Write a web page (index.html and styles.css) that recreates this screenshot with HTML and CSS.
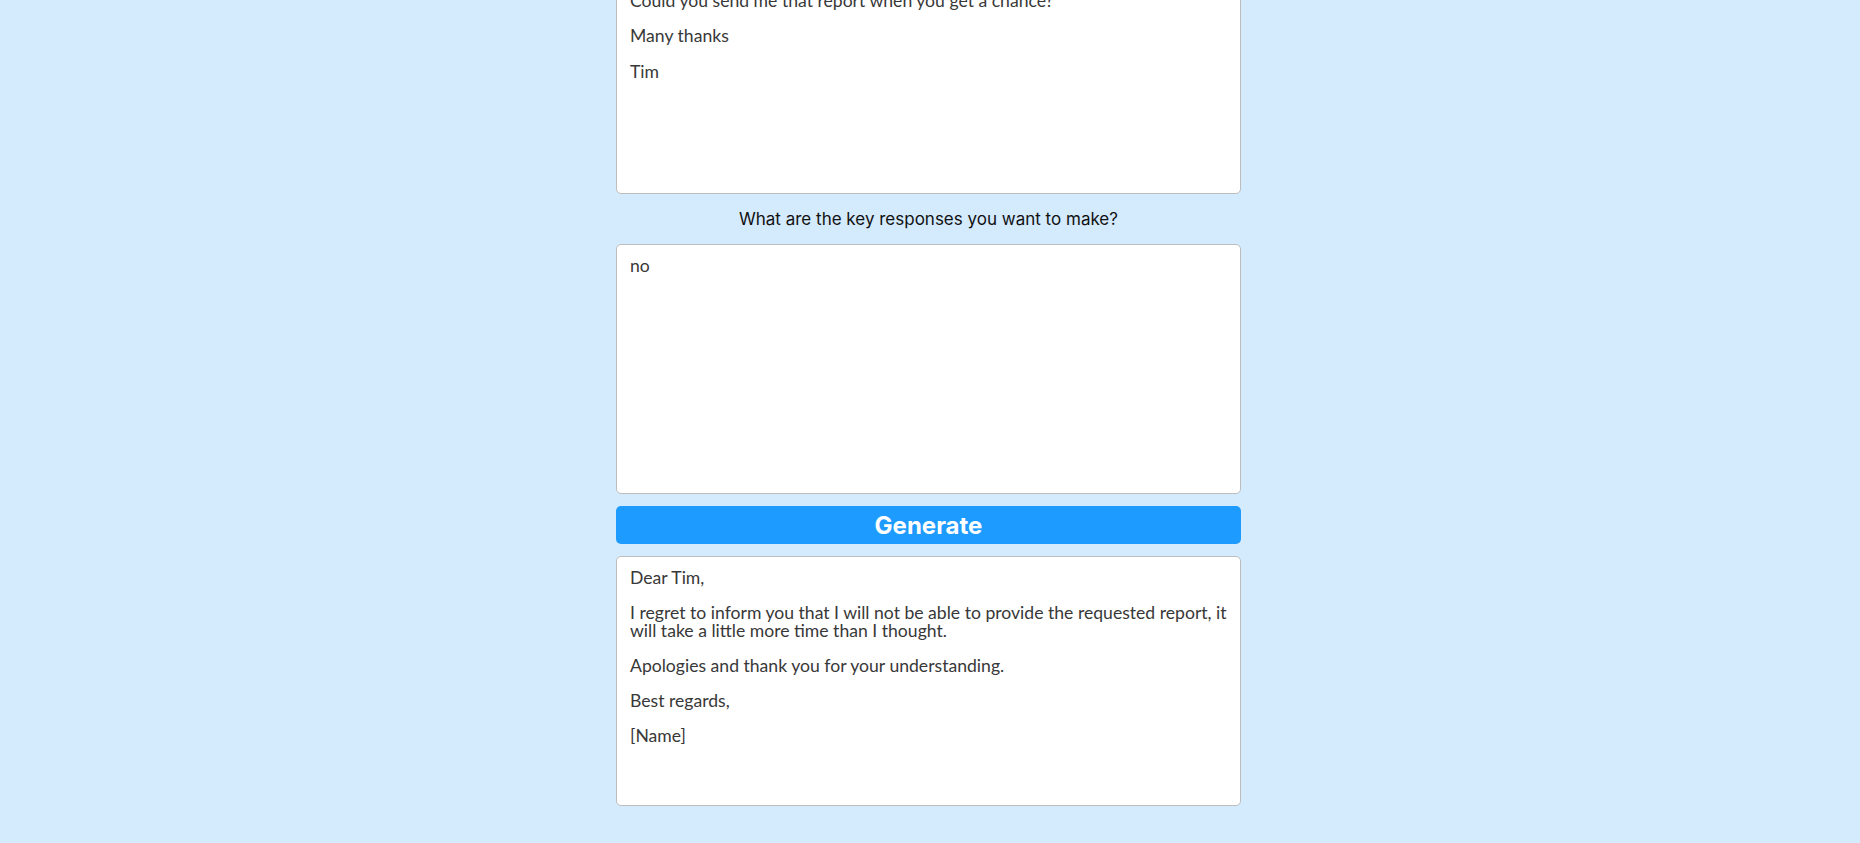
FILE: index.html
```html
<!DOCTYPE html>
<html lang="en">
<head>
<meta charset="utf-8">
<title>Email Reply Generator</title>
<link rel="stylesheet" href="styles.css">
</head>
<body>
<main class="viewport">
  <div class="form">
    <h1 class="title">Email Reply Generator</h1>
    <p class="label">Paste the email you want to reply to</p>
    <textarea class="box" readonly>Hi,

Could you send me that report when you get a chance?

Many thanks

Tim</textarea>
    <p class="label">What are the key responses you want to make?</p>
    <textarea class="box" readonly>no</textarea>
    <button class="generate" type="button">Generate</button>
    <textarea class="box" readonly>Dear Tim,

I regret to inform you that I will not be able to provide the requested report, it will take a little more time than I thought.

Apologies and thank you for your understanding.

Best regards,

[Name]</textarea>
  </div>
</main>
</body>
</html>
```

FILE: styles.css
```css
html, body {
  margin: 0;
  padding: 0;
}

body {
  background: #d4eafd;
  font-family: Inter, "Liberation Sans", sans-serif;
}

.viewport {
  height: 100vh;
  overflow: hidden;
  display: flex;
  flex-direction: column;
  justify-content: flex-end;
  align-items: center;
}

.form {
  width: 625px;
  margin-right: 3px;
  display: flex;
  flex-direction: column;
  padding-bottom: 37px;
  flex-shrink: 0;
}

.title {
  margin: 20px 0;
  text-align: center;
  font-size: 32px;
  color: #111;
}

.label {
  margin: 15px 0 15px;
  text-align: center;
  font-size: 17px;
  line-height: 20px;
  color: #111;
}

.box {
  box-sizing: border-box;
  display: block;
  width: 100%;
  height: 250px;
  margin: 0;
  padding: 12px 12px 12px 13px;
  border: 1px solid #bdbdbd;
  border-radius: 5px;
  background: #fff;
  color: #383838;
  font-family: Lato, "Liberation Sans", sans-serif;
  font-size: 17.6px;
  line-height: 17.6px;
  resize: none;
  overflow: hidden;
  outline: none;
}

.generate {
  box-sizing: border-box;
  height: 38px;
  margin: 12px 0;
  padding: 0;
  border: none;
  border-radius: 5px;
  background: #1e9bff;
  color: #fff;
  font-family: Inter, "Liberation Sans", sans-serif;
  font-size: 24px;
  font-weight: 700;
  cursor: pointer;
}
```
